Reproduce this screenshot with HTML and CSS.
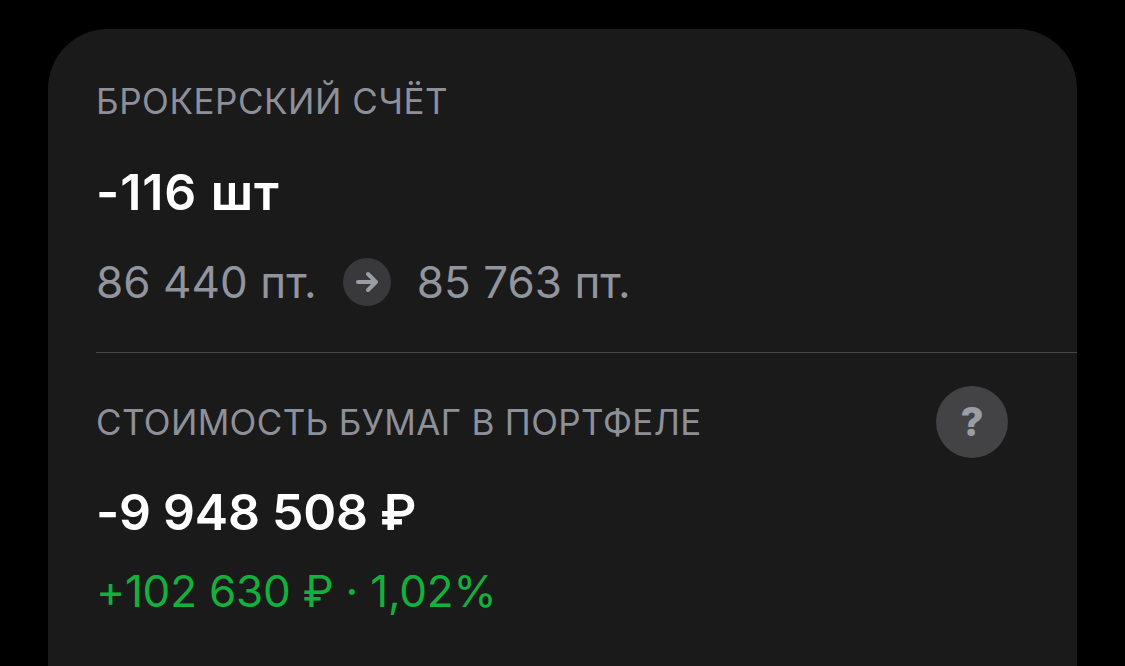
FILE: index.html
```html
<!DOCTYPE html>
<html lang="ru">
<head>
    <meta charset="UTF-8">
    <title>Брокерский счёт</title>
    <link rel="stylesheet" href="styles.css">
</head>
<body>
    <div class="card">
        <section class="section">
            <div class="label">БРОКЕРСКИЙ СЧЁТ</div>
            <div class="amount">-116 шт</div>
            <div class="prices">
                <span>86 440 пт.</span>
                <span class="arrow-badge">
                    <svg width="24" height="24" viewBox="0 0 24 24" fill="none" xmlns="http://www.w3.org/2000/svg">
                        <path d="M3 12H21M13 4L21 12L13 20" stroke="#9a9ca6" stroke-width="4" stroke-linecap="round" stroke-linejoin="round"/>
                    </svg>
                </span>
                <span>85 763 пт.</span>
            </div>
        </section>
        <section class="section section-value">
            <div class="label-row">
                <div class="label label-long">СТОИМОСТЬ БУМАГ В ПОРТФЕЛЕ</div>
                <div class="help-badge">?</div>
            </div>
            <div class="amount amount-value">-9 948 508 ₽</div>
            <div class="change">+102 630 ₽ · 1,02%</div>
        </section>
    </div>
</body>
</html>
```

FILE: styles.css
```css
body {
    font-family: 'Inter', 'Liberation Sans', sans-serif;
    background-color: #000;
    margin: 0;
    padding: 29px 48px 0 48px;
    height: 666px;
    box-sizing: border-box;
    overflow: hidden;
}

.card {
    background-color: #1a1a1b;
    border-radius: 60px 60px 0 0;
    height: 637px;
    padding-left: 48px;
}

.section {
    padding-top: 52px;
    height: 324px;
    box-sizing: border-box;
    border-bottom: 1px solid #464648;
}

.section-value {
    border-bottom: none;
    padding-top: 33px;
}

.label {
    font-size: 35px;
    line-height: 40px;
    letter-spacing: 0.55px;
    color: #8e9099;
}

.label-long {
    letter-spacing: 0.35px;
}

.label-row {
    display: flex;
    align-items: center;
    justify-content: space-between;
    padding-right: 69px;
    height: 72px;
}

.amount {
    font-size: 50px;
    line-height: 56px;
    font-weight: 600;
    letter-spacing: 0.9px;
    color: #fff;
    margin-top: 43px;
}

.amount-value {
    letter-spacing: -0.25px;
    margin-top: 26px;
}

.prices {
    display: flex;
    align-items: center;
    gap: 26px;
    font-size: 44px;
    line-height: 50px;
    letter-spacing: 0.05px;
    color: #92949e;
    margin-top: 37px;
}

.arrow-badge {
    width: 48px;
    height: 48px;
    border-radius: 50%;
    background-color: #39393b;
    display: flex;
    align-items: center;
    justify-content: center;
}

.help-badge {
    width: 72px;
    height: 72px;
    box-sizing: border-box;
    padding-bottom: 2px;
    border-radius: 50%;
    background-color: #434345;
    color: #9a9ca6;
    font-size: 40px;
    font-weight: 800;
    display: flex;
    align-items: center;
    justify-content: center;
}

.change {
    font-size: 44px;
    line-height: 50px;
    letter-spacing: -0.2px;
    color: #12b03c;
    margin-top: 26px;
}
```
